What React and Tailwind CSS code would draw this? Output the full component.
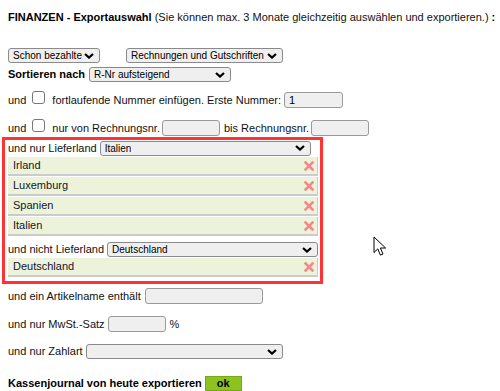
import React from "react";

const Chevron = () => (
  <svg width="10" height="6" viewBox="0 0 10 6" className="shrink-0">
    <path d="M1 1l4 3.6L9 1" fill="none" stroke="#000" strokeWidth="2.2" />
  </svg>
);

const Select = ({ label, className }) => (
  <div
    className={`flex items-center justify-between h-[15px] bg-[#efefef] border border-[#8a8a8a] rounded-[3px] pl-[4px] pr-[5px] text-[10px] text-black ${className}`}
  >
    <span className="truncate">{label}</span>
    <Chevron />
  </div>
);

const TextBox = ({ className, value }) => (
  <input
    readOnly
    value={value || ""}
    className={`h-[16px] bg-[#efefef] border border-[#9a9a9a] rounded-[3px] px-[4px] text-[11px] text-black outline-none ${className}`}
  />
);

const Check = () => (
  <input
    type="checkbox"
    className="appearance-none w-[13px] h-[13px] border border-[#767676] rounded-[3px] bg-white mb-[6px] shrink-0"
  />
);

const RemoveIcon = () => (
  <svg width="10" height="10" viewBox="0 0 10 10">
    <path d="M1.5 1.5l7 7M8.5 1.5l-7 7" stroke="#f48888" strokeWidth="2.6" strokeLinecap="square" />
  </svg>
);

const CountryItem = ({ name }) => (
  <div className="flex items-center justify-between h-[19px] ml-[3px] mr-[2px] bg-[#edf3da] border-b-2 border-r border-[#cbcbcb] pl-[5px] pr-[3px] text-[11px] text-[#14142e]">
    <span>{name}</span>
    <RemoveIcon />
  </div>
);

const onlyCountries = ["Irland", "Luxemburg", "Spanien", "Italien"];

export default function App() {
  return (
    <div className="relative w-[500px] h-[391px] bg-white overflow-hidden font-['Liberation_Sans',Arial,sans-serif] text-[11px] text-[#111]">
      {/* title */}
      <div className="flex items-center h-[34px] pl-2 whitespace-nowrap">
        <b className="text-black">FINANZEN - Exportauswahl</b>
        <span className="whitespace-pre"> (Sie können max. 3 Monate gleichzeitig auswählen und exportieren.)</span>
        <b className="text-black whitespace-pre"> :</b>
      </div>

      <div className="flex items-center h-[15px] mt-[14px] pl-2">
        <Select label="Schon bezahlte" className="w-[92px]" />
        <Select label="Rechnungen und Gutschriften" className="w-[157px] ml-[26px]" />
      </div>

      <div className="flex items-center h-[15px] mt-[4px] pl-2">
        <b className="text-black">Sortieren nach</b>
        <Select label="R-Nr aufsteigend" className="w-[142px] ml-[4px]" />
      </div>

      <div className="flex items-center h-[16px] mt-[10px] pl-2">
        <span>und</span>
        <span className="ml-[6px] flex items-center"><Check /></span>
        <span className="ml-[7px]">fortlaufende Nummer einfügen. Erste Nummer:</span>
        <TextBox value="1" className="w-[59px] ml-[3px]" />
      </div>

      <div className="flex items-center h-[16px] mt-[12px] pl-2">
        <span>und</span>
        <span className="ml-[6px] flex items-center"><Check /></span>
        <span className="ml-[7px]">nur von Rechnungsnr.</span>
        <TextBox className="w-[58px] ml-[2px]" />
        <span className="ml-[4px]">bis Rechnungsnr.</span>
        <TextBox className="w-[58px] ml-[2px]" />
      </div>

      {/* country filter */}
      <div className="ml-[2px] mt-[1px] w-[321px] border-[3px] border-[#ff3333] pb-[4px]">
        <div className="flex items-center h-[16px] pl-[3px]">
          <span>und nur Lieferland</span>
          <Select label="Italien" className="w-[211px] ml-[3px]" />
        </div>
        <div className="flex flex-col gap-[1px] mt-[1px]">
          {onlyCountries.map((c) => (
            <CountryItem key={c} name={c} />
          ))}
        </div>
        <div className="flex items-center h-[15px] mt-[6px] pl-[3px]">
          <span>und nicht Lieferland</span>
          <Select label="Deutschland" className="w-[211px] ml-[3px]" />
        </div>
        <div className="mt-[1px]">
          <CountryItem name="Deutschland" />
        </div>
      </div>

      <div className="flex items-center h-[16px] mt-[4px] pl-2">
        <span>und ein Artikelname enthält</span>
        <TextBox className="w-[118px] ml-[4px]" />
      </div>

      <div className="flex items-center h-[16px] mt-[12px] pl-2">
        <span>und nur MwSt.-Satz</span>
        <TextBox className="w-[58px] ml-[3px]" />
        <span className="ml-[4px]">%</span>
      </div>

      <div className="flex items-center h-[15px] mt-[12px] pl-2">
        <span>und nur Zahlart</span>
        <Select label="" className="w-[197px] ml-[3px]" />
      </div>

      <div className="flex items-center h-[15px] mt-[17px] pl-2">
        <b className="text-black">Kassenjournal von heute exportieren</b>
        <button className="ml-[3px] w-[37px] h-[15px] bg-[#8dc21f] border border-[#77a815] text-[11px] font-bold text-black leading-none">
          ok
        </button>
      </div>

      {/* mouse pointer */}
      <svg className="absolute left-[373px] top-[236px]" width="14" height="21" viewBox="0 0 14 21">
        <path
          d="M1 1v15.5l3.8-3.6 2.6 6.2 2.6-1.1-2.6-6h5.2z"
          fill="#fff"
          stroke="#000"
          strokeWidth="1"
          strokeLinejoin="round"
        />
      </svg>
    </div>
  );
}
